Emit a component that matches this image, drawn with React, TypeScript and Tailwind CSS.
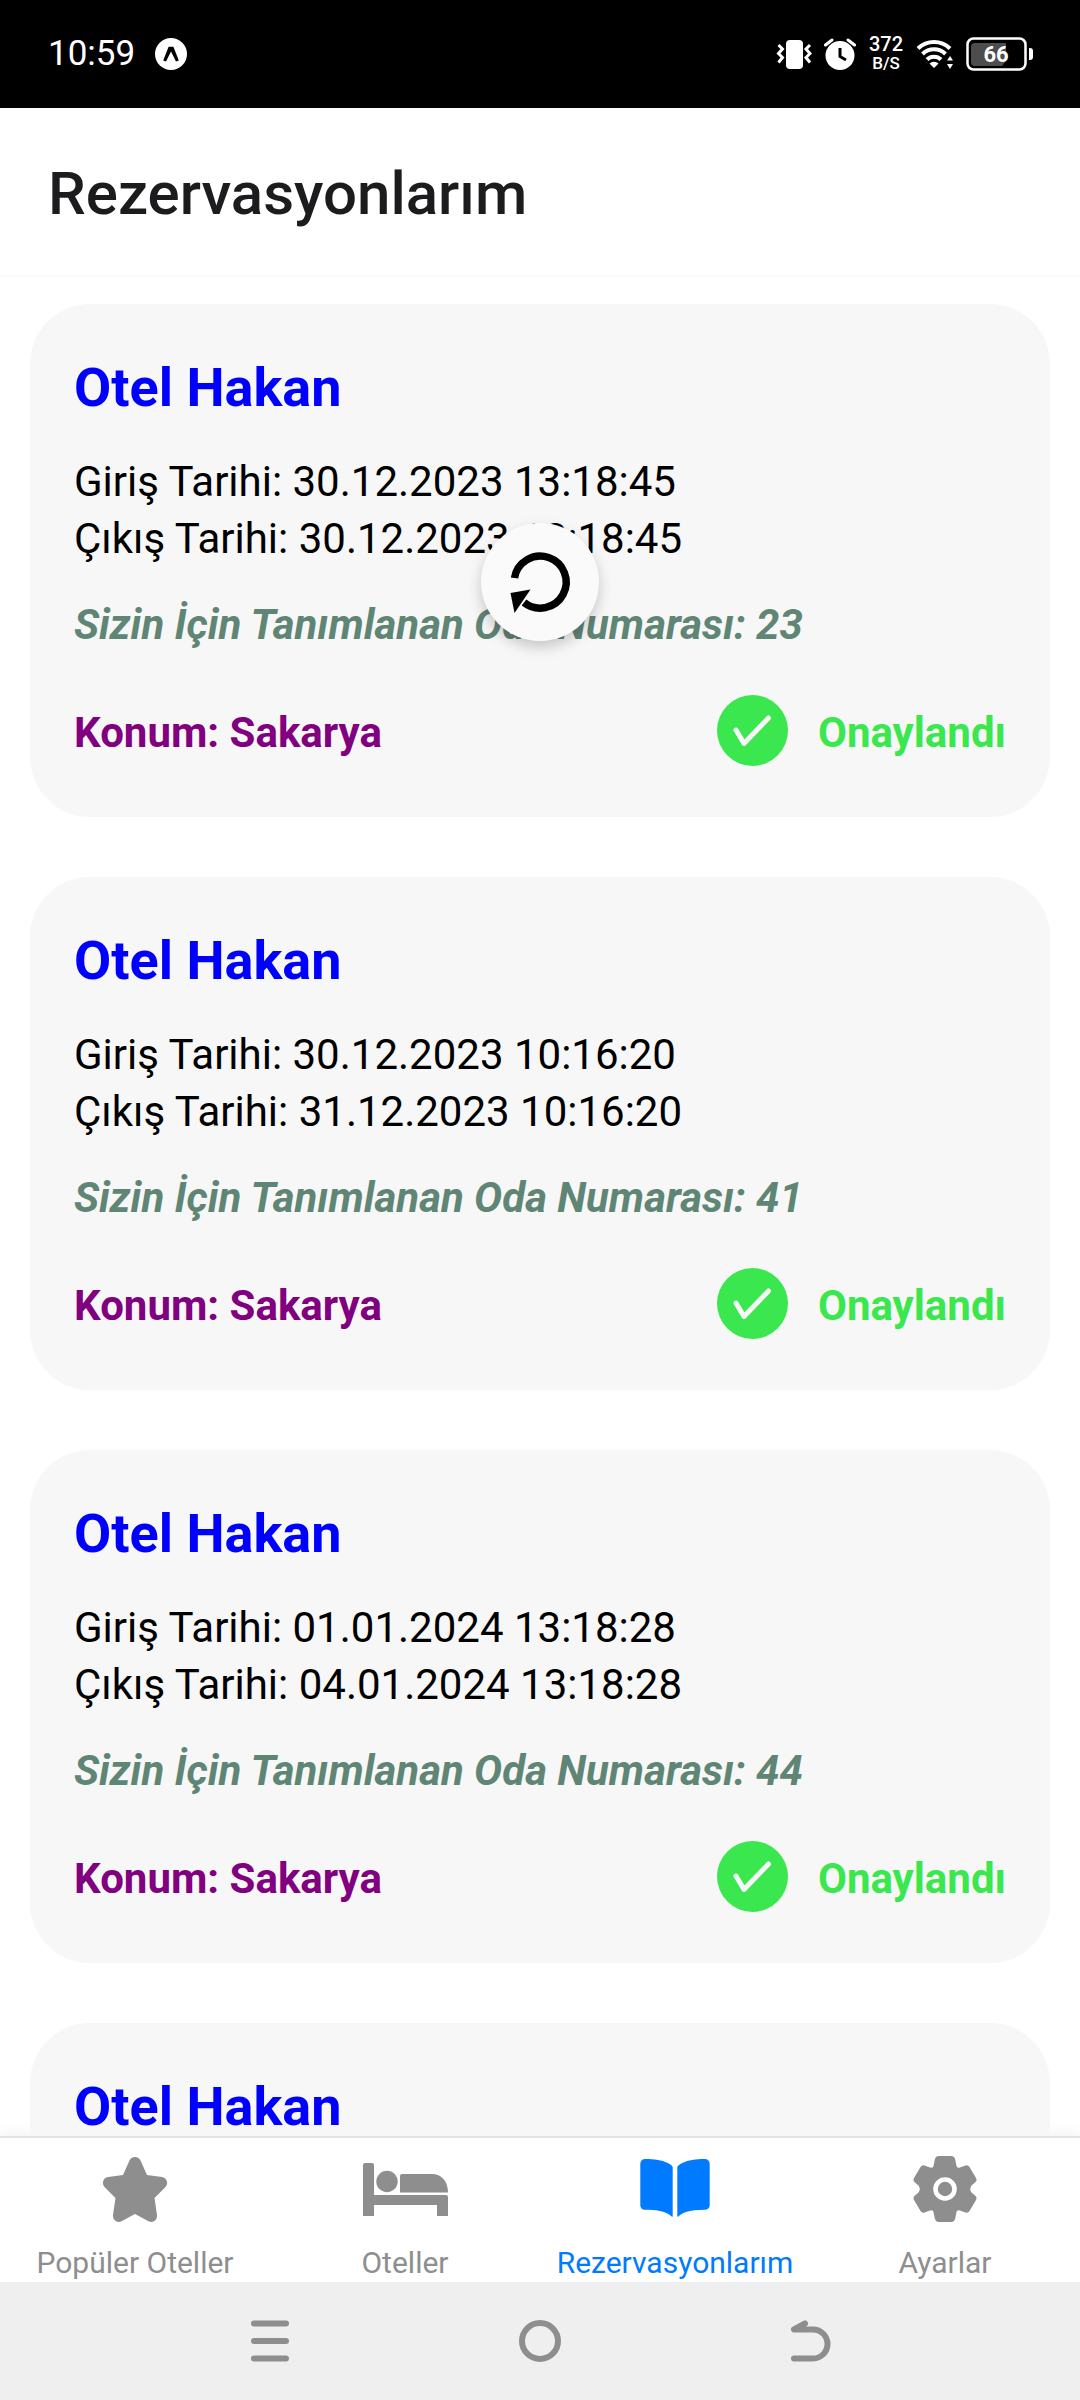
import type { ReactNode } from "react";
import { IoBook } from "react-icons/io5";

type Stay = { checkIn: string; checkOut: string; room: string; city: string };
type Reservation = { id: number; hotel: string; stay?: Stay };

const reservations: Reservation[] = [
  { id: 1, hotel: "Otel Hakan", stay: { checkIn: "30.12.2023 13:18:45", checkOut: "30.12.2023 13:18:45", room: "23", city: "Sakarya" } },
  { id: 2, hotel: "Otel Hakan", stay: { checkIn: "30.12.2023 10:16:20", checkOut: "31.12.2023 10:16:20", room: "41", city: "Sakarya" } },
  { id: 3, hotel: "Otel Hakan", stay: { checkIn: "01.01.2024 13:18:28", checkOut: "04.01.2024 13:18:28", room: "44", city: "Sakarya" } },
  { id: 4, hotel: "Otel Hakan" },
];

function StatusBar() {
  return (
    <div className="flex h-[108px] shrink-0 items-center justify-between bg-black pl-12 pr-[46px] text-white">
      <div className="flex items-center gap-5">
        <span className="text-[35px] leading-[42px]">10:59</span>
        <svg className="size-8" viewBox="0 0 32 32" aria-hidden="true">
          <circle cx="16" cy="16" r="16" fill="#fff" />
          <path d="M13.6 8.8h4.8l5.4 13.6-2.8 1L16 13.6l-5 9.8-2.8-1Z" fill="#000" />
        </svg>
      </div>
      <div className="flex items-center gap-3">
        <svg className="h-8 w-9" viewBox="0 0 36 32" fill="none" aria-hidden="true">
          <rect x="10" y="2" width="17" height="29" rx="4" fill="#fff" />
          <path d="M2.500 7l4 4-4 4.500 4 4-4 5M34 7l-4 4 4 4.500-4 4 4 5" stroke="#fff" strokeWidth="3" />
        </svg>
        <svg className="size-8" viewBox="0 0 32 32" fill="none" aria-hidden="true">
          <circle cx="16" cy="17.5" r="14.5" fill="#fff" />
          <path d="M1.500 7 8 2M30.500 7 24 2" stroke="#fff" strokeWidth="3" strokeLinecap="round" />
          <path d="M16 10v8.500l6 3.500" stroke="#000" strokeWidth="3" />
        </svg>
        <div className="flex w-9 flex-col items-center text-center font-medium">
          <span className="text-[20px] leading-[18px]">372</span>
          <span className="text-[17px] leading-5">B/S</span>
        </div>
        <svg className="h-8 w-[38px]" viewBox="0 0 38 32" fill="none" aria-hidden="true">
          <path d="M2 10.500a23 23 0 0 1 32 0M6.500 16a16.500 16.500 0 0 1 23 0M11 21.500a10 10 0 0 1 14 0" stroke="#fff" strokeWidth="4" />
          <path d="M18 30l-4.500-4.500a6.500 6.500 0 0 1 9 0ZM34 18l3 4.500h-6ZM34 31l3-5h-6Z" fill="#fff" />
        </svg>
        <svg className="h-[34px] w-[68px]" viewBox="0 0 68 34" aria-hidden="true">
          <rect x="1.5" y="1.5" width="58" height="31" rx="6" fill="none" stroke="#fff" strokeWidth="2.5" />
          <path d="M9 6h31v18l-4 5H9a4 4 0 0 1-4-4V10a4 4 0 0 1 4-4Z" fill="#4d4d4d" />
          <path d="M63 11h1a3 3 0 0 1 3 3v6a3 3 0 0 1-3 3h-1Z" fill="#fff" />
          <text x="30" y="25" textAnchor="middle" fill="#fff" fontSize="22" fontWeight="700">66</text>
        </svg>
      </div>
    </div>
  );
}

function StayDetails({ stay }: { stay: Stay }) {
  return (
    <>
      <div className="mt-[29px] text-[42px] leading-[57px] text-black">
        <p>Giriş Tarihi: {stay.checkIn}</p>
        <p>Çıkış Tarihi: {stay.checkOut}</p>
      </div>
      <p className="mt-[29px] text-[42px] font-bold italic leading-[57px] text-[#5f8575]">
        Sizin İçin Tanımlanan Oda Numarası: {stay.room}
      </p>
      <div className="mt-[42px] flex items-start justify-between text-[42px] font-bold leading-[75px]">
        <p className="text-[#800080]">Konum: {stay.city}</p>
        <div className="flex items-start gap-[30px]">
          <svg className="size-[71px]" viewBox="0 0 71 71" aria-hidden="true">
            <circle cx="35.5" cy="35.5" r="35.5" fill="#3ae74e" />
            <path d="M19 35l8 13.500L51.500 23" fill="none" stroke="#f7f7f7" strokeWidth="5" strokeLinecap="round" strokeLinejoin="round" />
          </svg>
          <span className="text-[#3ae74e]">Onaylandı</span>
        </div>
      </div>
    </>
  );
}

function ReservationCard({ item }: { item: Reservation }) {
  return (
    <article className="flex min-h-[513px] shrink-0 flex-col rounded-[60px] bg-[#f7f7f7] px-11 pb-[47px] pt-12">
      <h2 className="text-[54px] font-bold leading-[72px] text-[#0000ff]">{item.hotel}</h2>
      {item.stay && <StayDetails stay={item.stay} />}
    </article>
  );
}

function StarIcon() {
  return (
    <svg className="size-[66px]" viewBox="0 0 66 66" fill="currentColor" aria-hidden="true">
      <path d="M27.500 4.500a6 6 0 0 1 11 0L45 19l15 2a6 6 0 0 1 3.500 10L52.500 42l2.500 17a6 6 0 0 1-8.500 6.300L33 58l-13.500 7.300A6 6 0 0 1 11 59l2.500-17L2.500 31A6 6 0 0 1 6 21l15-2Z" />
    </svg>
  );
}

function BedIcon() {
  return (
    <svg className="h-[66px] w-[85px]" viewBox="0 0 85 66" fill="currentColor" aria-hidden="true">
      <path d="M0 9a2 2 0 0 1 2-2h7a2 2 0 0 1 2 2v30h72a2 2 0 0 1 2 2v19H74V49H11v11H0Z" />
      <circle cx="24" cy="25.5" r="10.7" />
      <path d="M37 20a2 2 0 0 1 2-2h30c9 0 16 7 16 18.500H37Z" />
    </svg>
  );
}

function GearIcon() {
  return (
    <svg className="size-[66px]" viewBox="0 0 66 66" fill="currentColor" aria-hidden="true">
      <path d="M22.500 5Q23 0 27 0H39Q43 0 43.500 5L44.500 10Q45 12.500 48 11.500L53.500 9.500Q56 8.700 57.500 11L64 22Q65.500 24.500 63 26.500L59.500 29.500Q57 33 59.500 36.500L63 39.500Q65.500 41.500 64 44L57.500 55Q56 57.300 53.500 56.500L48 54.500Q45 53.500 44.500 56L43.500 61Q43 66 39 66H27Q23 66 22.500 61L21.500 56Q21 53.500 18 54.500L12.500 56.500Q10 57.300 8.500 55L2 44Q.5 41.500 3 39.500L6.500 36.500Q9 33 6.500 29.500L3 26.500Q.5 24.500 2 22L8.500 11Q10 8.700 12.500 9.500L18 11.500Q21 12.500 21.500 10Z" />
      <circle cx="33" cy="33" r="9.5" fill="none" stroke="#fff" strokeWidth="4.6" />
    </svg>
  );
}

function Tab({ icon, label, active = false }: { icon: ReactNode; label: string; active?: boolean }) {
  return (
    <a
      href="#"
      aria-current={active ? "page" : undefined}
      className={`flex flex-1 flex-col items-center pt-[11px] ${active ? "text-[#007aff]" : "text-[#8e8e8f]"}`}
    >
      <span className="flex h-20 items-center justify-center">{icon}</span>
      <span className="mt-4 whitespace-nowrap text-[30px] leading-9">{label}</span>
    </a>
  );
}

export default function App() {
  return (
    <div className="flex h-screen flex-col bg-white font-[Roboto,sans-serif]">
      <StatusBar />
      <header className="flex h-[169px] shrink-0 items-center border-b-2 border-[#fafafa] px-12 pt-1">
        <h1 className="text-[60px] font-medium leading-[80px] text-[#1c1c1e]">Rezervasyonlarım</h1>
      </header>
      <main className="relative min-h-0 flex-1 overflow-hidden">
        <div className="flex h-full flex-col gap-[60px] overflow-hidden px-[30px] pt-[27px]">
          {reservations.map((item) => (
            <ReservationCard key={item.id} item={item} />
          ))}
        </div>
        <button
          type="button"
          aria-label="Yenile"
          className="absolute left-1/2 top-[246px] size-[118px] -translate-x-1/2 rounded-full bg-[#fafafa] shadow-[0_6px_14px_rgba(0,0,0,0.2)]"
        >
          <svg className="size-full" viewBox="0 0 118 118" aria-hidden="true">
            <path d="M33.500 55A26 26 0 1 1 43 79.500" fill="none" stroke="#000" strokeWidth="7.5" />
            <path d="M29.500 70 49.500 66.500 33.500 90Z" />
          </svg>
        </button>
      </main>
      <nav className="flex h-[146px] shrink-0 border-t-2 border-[#e3e3e4] bg-white shadow-[0_-4px_12px_rgba(0,0,0,0.05)]">
        <Tab icon={<StarIcon />} label="Popüler Oteller" />
        <Tab icon={<BedIcon />} label="Oteller" />
        <Tab icon={<IoBook className="size-[74px]" />} label="Rezervasyonlarım" active />
        <Tab icon={<GearIcon />} label="Ayarlar" />
      </nav>
      <div className="flex h-[118px] shrink-0 items-center bg-[#efefef] px-[135px] text-[#8e8e8e]">
        <button type="button" aria-label="Son uygulamalar" className="flex flex-1 justify-center">
          <svg className="size-[42px]" viewBox="0 0 42 42" fill="none" stroke="currentColor" strokeWidth="6" strokeLinecap="round" aria-hidden="true">
            <path d="M5 3.500h32M5 21h32M5 38.500h32" />
          </svg>
        </button>
        <button type="button" aria-label="Ana ekran" className="flex flex-1 justify-center">
          <svg className="size-[42px]" viewBox="0 0 42 42" fill="none" stroke="currentColor" strokeWidth="6" aria-hidden="true">
            <circle cx="21" cy="21" r="18" />
          </svg>
        </button>
        <button type="button" aria-label="Geri" className="flex flex-1 justify-center">
          <svg className="size-[42px]" viewBox="0 0 42 42" fill="none" stroke="currentColor" strokeWidth="6" strokeLinecap="round" strokeLinejoin="round" aria-hidden="true">
            <path d="M16 3.500 5 9.500h19a14.500 14.500 0 0 1 0 29H5" />
          </svg>
        </button>
      </div>
    </div>
  );
}
